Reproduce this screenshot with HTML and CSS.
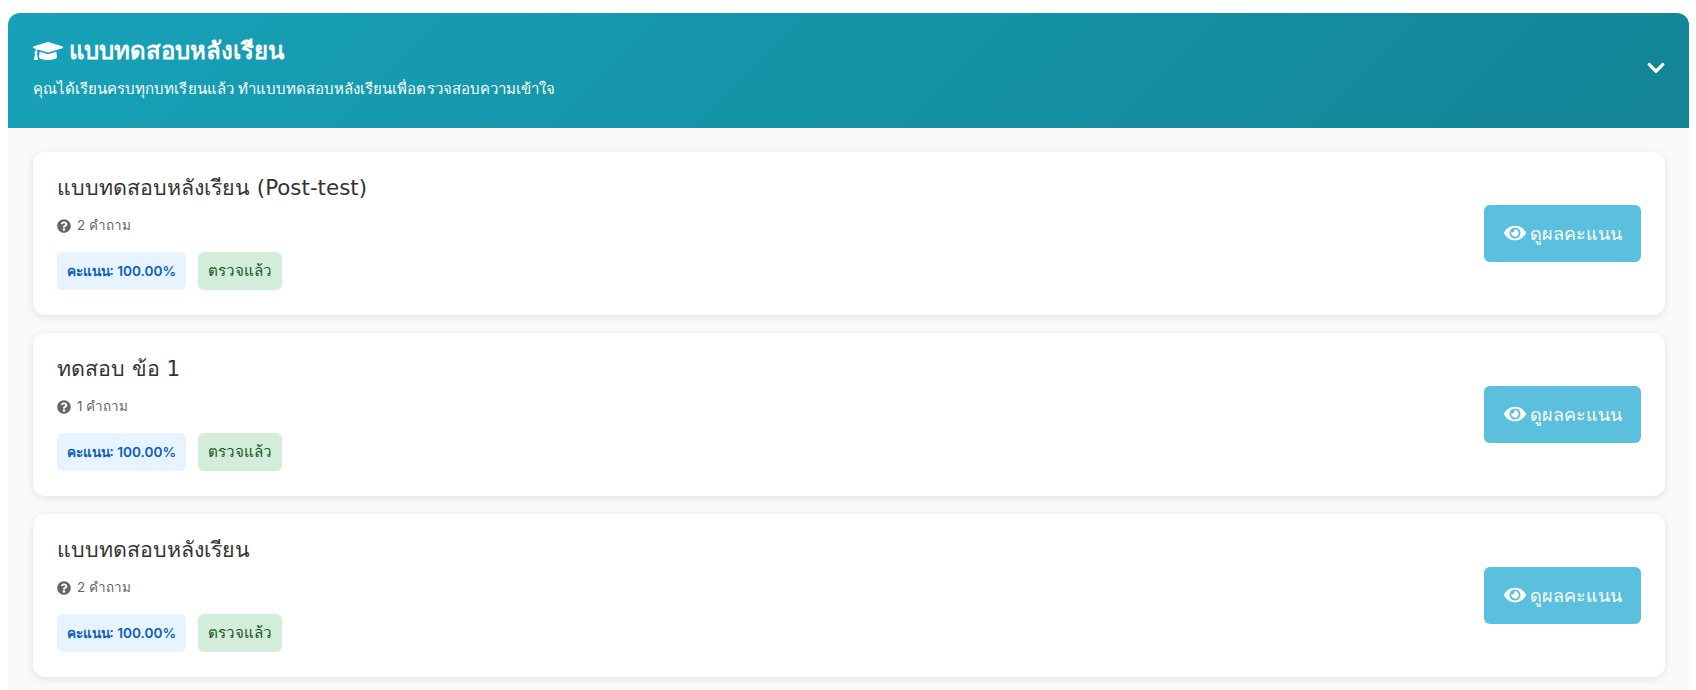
FILE: index.html
```html
<!DOCTYPE html>
<html lang="th">
<head>
  <meta charset="UTF-8">
  <title>แบบทดสอบหลังเรียน</title>
  <link rel="stylesheet" href="styles.css">
</head>
<body>
  <svg class="icon-defs" aria-hidden="true">
    <symbol id="i-cap" viewBox="0 0 640 512"><path d="M622.34 153.2L343.4 67.5c-15.2-4.67-31.6-4.67-46.79 0L17.66 153.2c-23.54 7.23-23.54 38.36 0 45.59l48.63 14.94c-10.67 13.19-17.23 29.28-17.88 46.9C38.78 266.15 32 276.11 32 288c0 10.78 5.68 19.85 13.86 25.65L20.33 428.53C18.11 438.52 25.71 448 35.94 448h56.11c10.24 0 17.84-9.48 15.62-19.47L82.14 313.65C90.32 307.85 96 298.78 96 288c0-11.57-6.47-21.25-15.66-26.87.76-15.02 8.44-28.3 20.69-36.72L296.6 284.5c9.06 2.78 26.44 6.25 46.79 0l278.95-85.7c23.55-7.24 23.55-38.36 0-45.6zM352.79 315.09c-28.53 8.76-52.84 3.92-65.59 0l-145.02-44.55L128 384c0 35.35 85.96 64 192 64s192-28.65 192-64l-14.18-113.47-145.03 44.56z"/></symbol>
    <symbol id="i-question" viewBox="0 0 512 512"><path d="M504 256c0 136.997-111.043 248-248 248S8 392.997 8 256C8 119.083 119.043 8 256 8s248 111.083 248 248zM262.655 90c-54.497 0-89.255 22.957-116.549 63.758-3.536 5.286-2.353 12.415 2.715 16.258l34.699 26.31c5.205 3.947 12.621 3.008 16.665-2.122 17.864-22.658 30.113-35.797 57.303-35.797 20.429 0 45.698 13.148 45.698 32.958 0 14.976-12.363 22.667-32.534 33.976C247.128 238.528 216 254.941 216 296v4c0 6.627 5.373 12 12 12h56c6.627 0 12-5.373 12-12v-1.333c0-28.462 83.186-29.647 83.186-106.667 0-58.002-60.165-102-116.531-102zM256 338c-25.365 0-46 20.635-46 46 0 25.364 20.635 46 46 46s46-20.636 46-46c0-25.365-20.635-46-46-46z"/></symbol>
    <symbol id="i-eye" viewBox="0 0 576 512"><path d="M572.52 241.4C518.29 135.59 410.93 64 288 64S57.68 135.64 3.48 241.41a32.35 32.35 0 0 0 0 29.19C57.71 376.41 165.07 448 288 448s230.32-71.64 284.52-177.41a32.35 32.35 0 0 0 0-29.19zM288 400a144 144 0 1 1 144-144 143.93 143.93 0 0 1-144 144zm0-240a95.31 95.31 0 0 0-25.31 3.79 47.85 47.85 0 0 1-66.9 66.9A95.78 95.78 0 1 0 288 160z"/></symbol>
    <symbol id="i-chevron" viewBox="0 0 448 512"><path d="M207.029 381.476L12.686 187.132c-9.373-9.373-9.373-24.569 0-33.941l22.667-22.667c9.357-9.357 24.522-9.375 33.901-.04L224 284.505l154.745-154.021c9.379-9.335 24.544-9.317 33.901.04l22.667 22.667c9.373 9.373 9.373 24.569 0 33.941L240.971 381.476c-9.373 9.372-24.569 9.372-33.942 0z"/></symbol>
  </svg>

  <section class="panel">
    <header class="panel-head">
      <div>
        <h2 class="panel-title"><svg class="icon icon-cap"><use href="#i-cap"/></svg>แบบทดสอบหลังเรียน</h2>
        <p class="panel-sub">คุณได้เรียนครบทุกบทเรียนแล้ว ทำแบบทดสอบหลังเรียนเพื่อตรวจสอบความเข้าใจ</p>
      </div>
      <svg class="icon icon-chevron"><use href="#i-chevron"/></svg>
    </header>

    <div class="panel-body">
      <div class="quiz-card">
        <div class="quiz-info">
          <h3 class="quiz-title">แบบทดสอบหลังเรียน (Post-test)</h3>
          <div class="quiz-meta"><svg class="icon icon-question"><use href="#i-question"/></svg>2 คำถาม</div>
          <div class="badges">
            <span class="badge badge-score">คะแนน: 100.00%</span>
            <span class="badge badge-done">ตรวจแล้ว</span>
          </div>
        </div>
        <a class="btn-result" href="#"><svg class="icon icon-eye"><use href="#i-eye"/></svg>ดูผลคะแนน</a>
      </div>

      <div class="quiz-card">
        <div class="quiz-info">
          <h3 class="quiz-title">ทดสอบ ข้อ 1</h3>
          <div class="quiz-meta"><svg class="icon icon-question"><use href="#i-question"/></svg>1 คำถาม</div>
          <div class="badges">
            <span class="badge badge-score">คะแนน: 100.00%</span>
            <span class="badge badge-done">ตรวจแล้ว</span>
          </div>
        </div>
        <a class="btn-result" href="#"><svg class="icon icon-eye"><use href="#i-eye"/></svg>ดูผลคะแนน</a>
      </div>

      <div class="quiz-card">
        <div class="quiz-info">
          <h3 class="quiz-title">แบบทดสอบหลังเรียน</h3>
          <div class="quiz-meta"><svg class="icon icon-question"><use href="#i-question"/></svg>2 คำถาม</div>
          <div class="badges">
            <span class="badge badge-score">คะแนน: 100.00%</span>
            <span class="badge badge-done">ตรวจแล้ว</span>
          </div>
        </div>
        <a class="btn-result" href="#"><svg class="icon icon-eye"><use href="#i-eye"/></svg>ดูผลคะแนน</a>
      </div>
    </div>
  </section>
</body>
</html>
```

FILE: styles.css
```css
html, body {
  height: 690px;
  overflow: hidden;
}
body {
  margin: 0;
  padding: 13px 7px 0 8px;
  box-sizing: border-box;
  background: #fff;
  font-family: Inter, "Noto Sans", sans-serif;
  color: #333;
}
.icon-defs {
  display: none;
}
.icon {
  fill: currentColor;
  flex: none;
}
.panel {
  border-radius: 12px 12px 0 0;
  background: #fafafa;
}
.panel-head {
  height: 115px;
  box-sizing: border-box;
  padding: 0 24px 6px 25px;
  display: flex;
  align-items: center;
  justify-content: space-between;
  background: linear-gradient(135deg, #17a2b8, #138496);
  border-radius: 12px 12px 0 0;
  color: #fff;
}
.panel-title {
  margin: 0 0 11px;
  font-size: 24px;
  line-height: 32px;
  font-weight: 700;
  display: flex;
  align-items: center;
}
.icon-cap {
  width: 30px;
  height: 24px;
  margin-right: 6px;
}
.panel-sub {
  margin: 0;
  font-size: 15px;
  line-height: 22px;
  letter-spacing: 0.03px;
}
.icon-chevron {
  width: 18px;
  height: 20px;
  margin-top: 1px;
}
.panel-body {
  padding: 24px 24px 13px 25px;
  display: flex;
  flex-direction: column;
  gap: 18px;
}
.quiz-card {
  height: 163px;
  box-sizing: border-box;
  padding: 0 24px;
  display: flex;
  align-items: center;
  justify-content: space-between;
  background: #fff;
  border-radius: 12px;
  box-shadow: 0 2px 8px rgba(0, 0, 0, 0.1);
}
.quiz-info {
  padding-bottom: 4px;
}
.quiz-title {
  margin: 0 0 12px;
  font-family: "DejaVu Sans", "Noto Sans", sans-serif;
  font-size: 21.4px;
  line-height: 30px;
  font-weight: 400;
  color: #333;
}
.quiz-meta {
  margin-bottom: 16px;
  font-size: 13.5px;
  line-height: 21px;
  color: #666;
  display: flex;
  align-items: center;
}
.icon-question {
  width: 14px;
  height: 14px;
  margin-right: 6px;
}
.badges {
  display: flex;
  gap: 12px;
}
.badge {
  height: 38px;
  padding: 0 10px;
  display: flex;
  align-items: center;
  border-radius: 6px;
  font-size: 15.2px;
}
.badge-score {
  padding: 0 9.5px;
  background: #e7f3ff;
  color: #0d5fb8;
  font-size: 13.6px;
  font-weight: 600;
}
.badge-done {
  background: #d4edda;
  color: #155724;
}
.btn-result {
  width: 157px;
  height: 57px;
  display: flex;
  align-items: center;
  justify-content: center;
  background: #5bc0de;
  border-radius: 6px;
  color: #fff;
  font-size: 18px;
  text-decoration: none;
}
.icon-eye {
  width: 22px;
  height: 20px;
  margin-right: 4px;
  margin-top: -2px;
}
```
